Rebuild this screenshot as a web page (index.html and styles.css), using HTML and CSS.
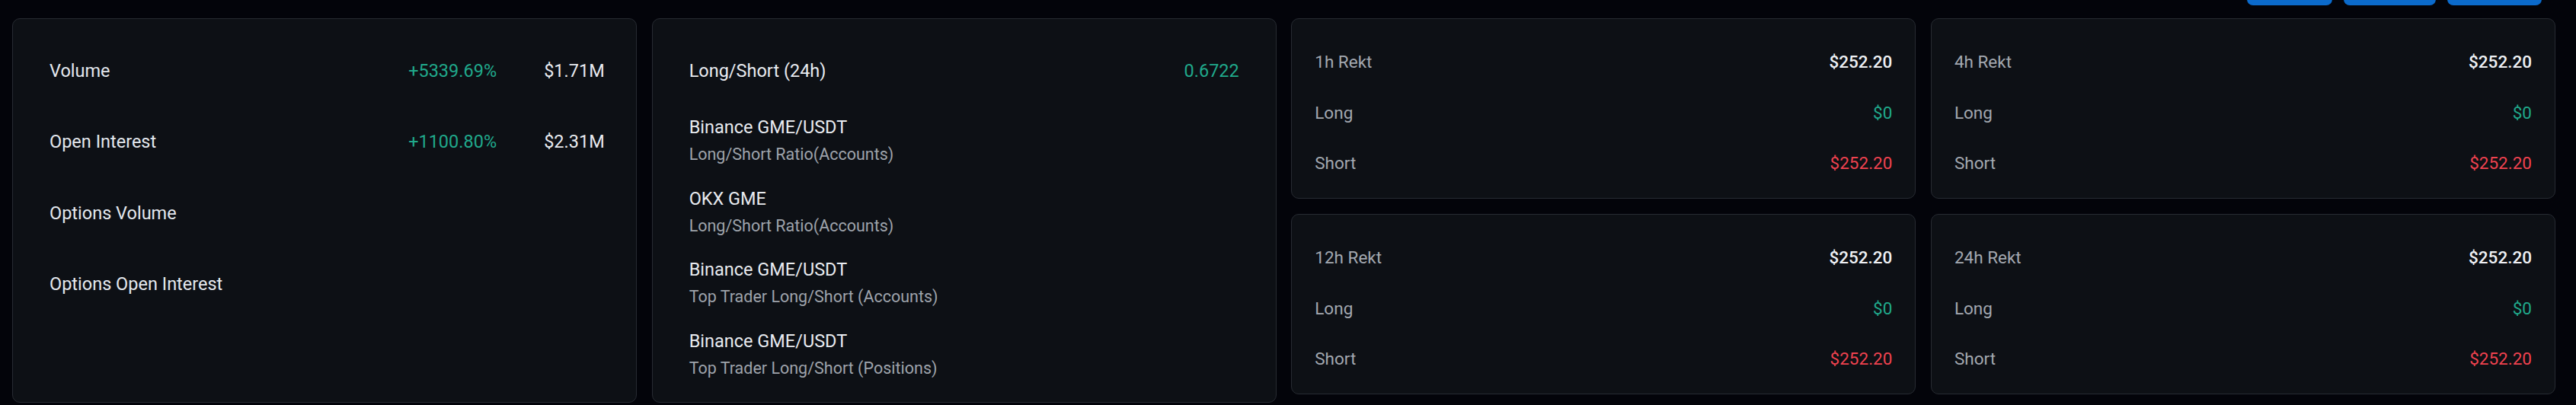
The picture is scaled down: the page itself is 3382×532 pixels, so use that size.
FILE: index.html
```html
<!DOCTYPE html>
<html lang="en">
<head>
<meta charset="utf-8">
<title>GME Market Overview</title>
<link rel="stylesheet" href="styles.css">
</head>
<body>
<div class="page">
  <div class="toolbar">
    <button class="tool-btn w1" type="button" aria-label="Trade"></button>
    <button class="tool-btn w2" type="button" aria-label="Alerts"></button>
    <button class="tool-btn w3" type="button" aria-label="Share"></button>
  </div>

  <div class="overview">
    <section class="card stats">
      <div class="stat-row">
        <span class="stat-label">Volume</span>
        <span class="stat-change up">+5339.69%</span>
        <span class="stat-value">$1.71M</span>
      </div>
      <div class="stat-row">
        <span class="stat-label">Open Interest</span>
        <span class="stat-change up">+1100.80%</span>
        <span class="stat-value">$2.31M</span>
      </div>
      <div class="stat-row">
        <span class="stat-label">Options Volume</span>
        <span class="stat-change"></span>
        <span class="stat-value"></span>
      </div>
      <div class="stat-row">
        <span class="stat-label">Options Open Interest</span>
        <span class="stat-change"></span>
        <span class="stat-value"></span>
      </div>
    </section>

    <section class="card ratios">
      <div class="ratio-head">
        <span class="ratio-title">Long/Short (24h)</span>
        <span class="ratio-value up">0.6722</span>
      </div>
      <ul class="ratio-list">
        <li class="ratio-item">
          <span class="ratio-source">Binance GME/USDT</span>
          <span class="ratio-kind">Long/Short Ratio(Accounts)</span>
        </li>
        <li class="ratio-item">
          <span class="ratio-source">OKX GME</span>
          <span class="ratio-kind">Long/Short Ratio(Accounts)</span>
        </li>
        <li class="ratio-item">
          <span class="ratio-source">Binance GME/USDT</span>
          <span class="ratio-kind">Top Trader Long/Short (Accounts)</span>
        </li>
        <li class="ratio-item">
          <span class="ratio-source">Binance GME/USDT</span>
          <span class="ratio-kind">Top Trader Long/Short (Positions)</span>
        </li>
      </ul>
    </section>

    <div class="rekt-grid">
      <section class="card rekt">
        <div class="rekt-row"><span class="rekt-label">1h Rekt</span><span class="rekt-total">$252.20</span></div>
        <div class="rekt-row"><span class="rekt-label">Long</span><span class="rekt-amount up">$0</span></div>
        <div class="rekt-row"><span class="rekt-label">Short</span><span class="rekt-amount down">$252.20</span></div>
      </section>
      <section class="card rekt">
        <div class="rekt-row"><span class="rekt-label">4h Rekt</span><span class="rekt-total">$252.20</span></div>
        <div class="rekt-row"><span class="rekt-label">Long</span><span class="rekt-amount up">$0</span></div>
        <div class="rekt-row"><span class="rekt-label">Short</span><span class="rekt-amount down">$252.20</span></div>
      </section>
      <section class="card rekt">
        <div class="rekt-row"><span class="rekt-label">12h Rekt</span><span class="rekt-total">$252.20</span></div>
        <div class="rekt-row"><span class="rekt-label">Long</span><span class="rekt-amount up">$0</span></div>
        <div class="rekt-row"><span class="rekt-label">Short</span><span class="rekt-amount down">$252.20</span></div>
      </section>
      <section class="card rekt">
        <div class="rekt-row"><span class="rekt-label">24h Rekt</span><span class="rekt-total">$252.20</span></div>
        <div class="rekt-row"><span class="rekt-label">Long</span><span class="rekt-amount up">$0</span></div>
        <div class="rekt-row"><span class="rekt-label">Short</span><span class="rekt-amount down">$252.20</span></div>
      </section>
    </div>
  </div>
</div>
</body>
</html>
```

FILE: styles.css
```css
* {
  box-sizing: border-box;
}

html,
body {
  margin: 0;
  background: #03040a;
}

body {
  font-family: Roboto, "Liberation Sans", sans-serif;
  color: #e4e8ee;
  overflow: hidden;
}

.page {
  padding: 0 27px 0 16px;
}

/* header buttons, scrolled mostly out of view */
.toolbar {
  display: flex;
  justify-content: flex-end;
  align-items: flex-end;
  gap: 15px;
  height: 7px;
  margin-bottom: 17px;
  padding-right: 18px;
}

.tool-btn {
  flex: none;
  height: 44px;
  border: 0;
  border-radius: 8px;
  background: #0b6acb;
}

.tool-btn.w1 { width: 112px; }
.tool-btn.w2 { width: 121px; }
.tool-btn.w3 { width: 124px; }

.overview {
  display: grid;
  grid-template-columns: repeat(4, 1fr);
  column-gap: 19.5px;
  align-items: stretch;
}

.card {
  background: #0d1015;
  border: 1px solid #272b32;
  border-radius: 10px;
}

.up { color: #20a98b; }
.down { color: #f0424f; }

/* volume / open interest */
.stats {
  padding: 21px 48px;
}

.stat-row {
  display: grid;
  grid-template-columns: 1fr auto 73px;
  column-gap: 62px;
  align-items: center;
  height: 93.5px;
  font-size: 23.5px;
}

.stat-label {
  color: #e4e8ee;
}

.stat-value {
  color: #e8ebf0;
  text-align: right;
}

/* long / short ratio sources */
.ratios {
  padding: 21px 48px 26px;
}

.ratio-head {
  display: flex;
  justify-content: space-between;
  align-items: center;
  height: 93.5px;
  font-size: 23.5px;
}

.ratio-title {
  color: #e8ebf0;
}

.ratio-list {
  list-style: none;
  margin: 0;
  padding: 9.5px 0 0;
  display: flex;
  flex-direction: column;
  gap: 21.7px;
}

.ratio-item {
  display: flex;
  flex-direction: column;
}

.ratio-source {
  line-height: 36px;
  font-size: 23.5px;
  color: #e8ebf0;
}

.ratio-kind {
  line-height: 36px;
  font-size: 21.5px;
  color: #9ea3ab;
}

/* liquidation cards */
.rekt-grid {
  grid-column: span 2;
  align-self: start;
  display: grid;
  grid-template-columns: repeat(2, 1fr);
  column-gap: 19.5px;
  row-gap: 20px;
}

.rekt {
  padding: 23px 30px 12px;
}

.rekt-row {
  display: flex;
  justify-content: space-between;
  align-items: center;
  height: 66.6px;
  font-size: 22.5px;
}

.rekt-label {
  color: #a3a8b0;
}

.rekt-total {
  color: #eef0f4;
  font-weight: 500;
}
```
